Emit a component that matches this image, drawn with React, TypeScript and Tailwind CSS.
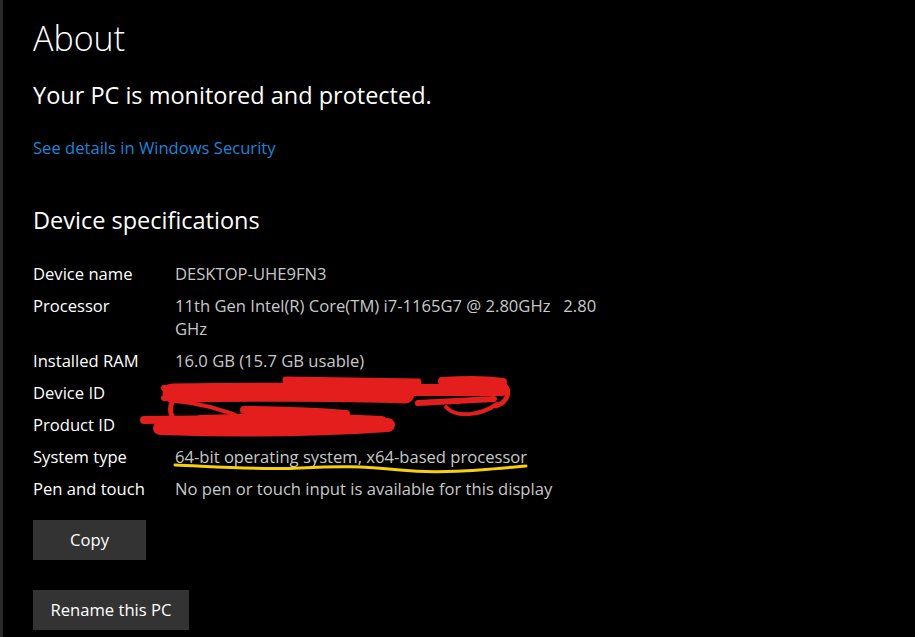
import React from "react";

const font = { fontFamily: '"Open Sans", "Noto Sans", sans-serif' };

const rows: { label: string; value: React.ReactNode }[] = [
  { label: "Device name", value: "DESKTOP-UHE9FN3" },
  {
    label: "Processor",
    value: (
      <>
        11th Gen Intel(R) Core(TM) i7-1165G7 @ 2.80GHz&nbsp;&nbsp;&nbsp;2.80
        <br />
        GHz
      </>
    ),
  },
  { label: "Installed RAM", value: "16.0 GB (15.7 GB usable)" },
  { label: "Device ID", value: "" },
  { label: "Product ID", value: "" },
  { label: "System type", value: "64-bit operating system, x64-based processor" },
  { label: "Pen and touch", value: "No pen or touch input is available for this display" },
];

export default function App() {
  return (
    <div className="relative flex h-[637px] w-[915px] overflow-hidden bg-black" style={font}>
      <div className="w-[3px] shrink-0 bg-[#2a2a2a]" />
      <div className="flex flex-col pl-[30px]">
        <h1 className="mt-[18px] text-[34px] font-light leading-[40px] text-white">About</h1>
        <p className="mt-[21px] text-[23.5px] font-normal leading-[32px] text-white">
          Your PC is monitored and protected.
        </p>
        <a className="mt-[25px] text-[16.6px] leading-[24px] text-[#1a86d9]">See details in Windows Security</a>
        <h2 className="mt-[44px] text-[23.5px] font-normal leading-[32px] text-white">Device specifications</h2>
        <div className="mt-[26px] flex flex-col gap-[9px]">
          {rows.map((r) => (
            <div key={r.label} className="flex text-[16.6px] leading-[23px]">
              <div className="w-[142px] shrink-0 text-white">{r.label}</div>
              <div className="w-[440px] text-[#c8c8c8]">{r.value || "\u00a0"}</div>
            </div>
          ))}
        </div>
        <button className="mt-[20px] h-[40px] w-[113px] bg-[#333333] text-[16.6px] text-white">Copy</button>
        <button className="mt-[30px] h-[40px] w-[156px] bg-[#333333] text-[16.6px] text-white">Rename this PC</button>
      </div>
      <svg
        className="pointer-events-none absolute left-0 top-0"
        width="915"
        height="637"
        viewBox="0 0 915 637"
        fill="none"
        strokeLinecap="round"
        strokeLinejoin="round"
      >
        <g stroke="#e41d1d">
          <path d="M172 393 C 250 392, 350 392, 405 394" strokeWidth="19" />
          <path d="M164 388 L 180 387" strokeWidth="6" />
          <path d="M164 398 L 180 398" strokeWidth="6" />
          <path d="M286 380 L 418 382" strokeWidth="7" />
          <path d="M442 381 C 470 379, 490 380, 503 382" strokeWidth="8" />
          <path d="M400 390 L 502 390" strokeWidth="12" />
          <path d="M418 403 L 494 399" strokeWidth="6" />
          <path d="M502 383 C 512 390, 508 402, 496 406" strokeWidth="5" />
          <path d="M446 407 C 456 418, 480 416, 497 404" strokeWidth="4" />
          <path d="M144 420 L 250 419" strokeWidth="8" />
          <path d="M160 428 C 250 431, 330 429, 388 425" strokeWidth="14" />
          <path d="M200 420 C 260 418, 330 418, 382 421" strokeWidth="10" />
          <path d="M244 410 C 280 410, 320 412, 346 414" strokeWidth="8" />
          <path d="M172 402 C 170 407, 170 412, 172 416" strokeWidth="5" />
          <path d="M175 401 C 200 403, 225 410, 248 420" strokeWidth="4" />
        </g>
        <path
          d="M175 465 C 220 467, 260 470, 300 468 S 360 466, 400 470 S 480 470, 526 466"
          stroke="#f6d10a"
          strokeWidth="3"
        />
      </svg>
    </div>
  );
}
